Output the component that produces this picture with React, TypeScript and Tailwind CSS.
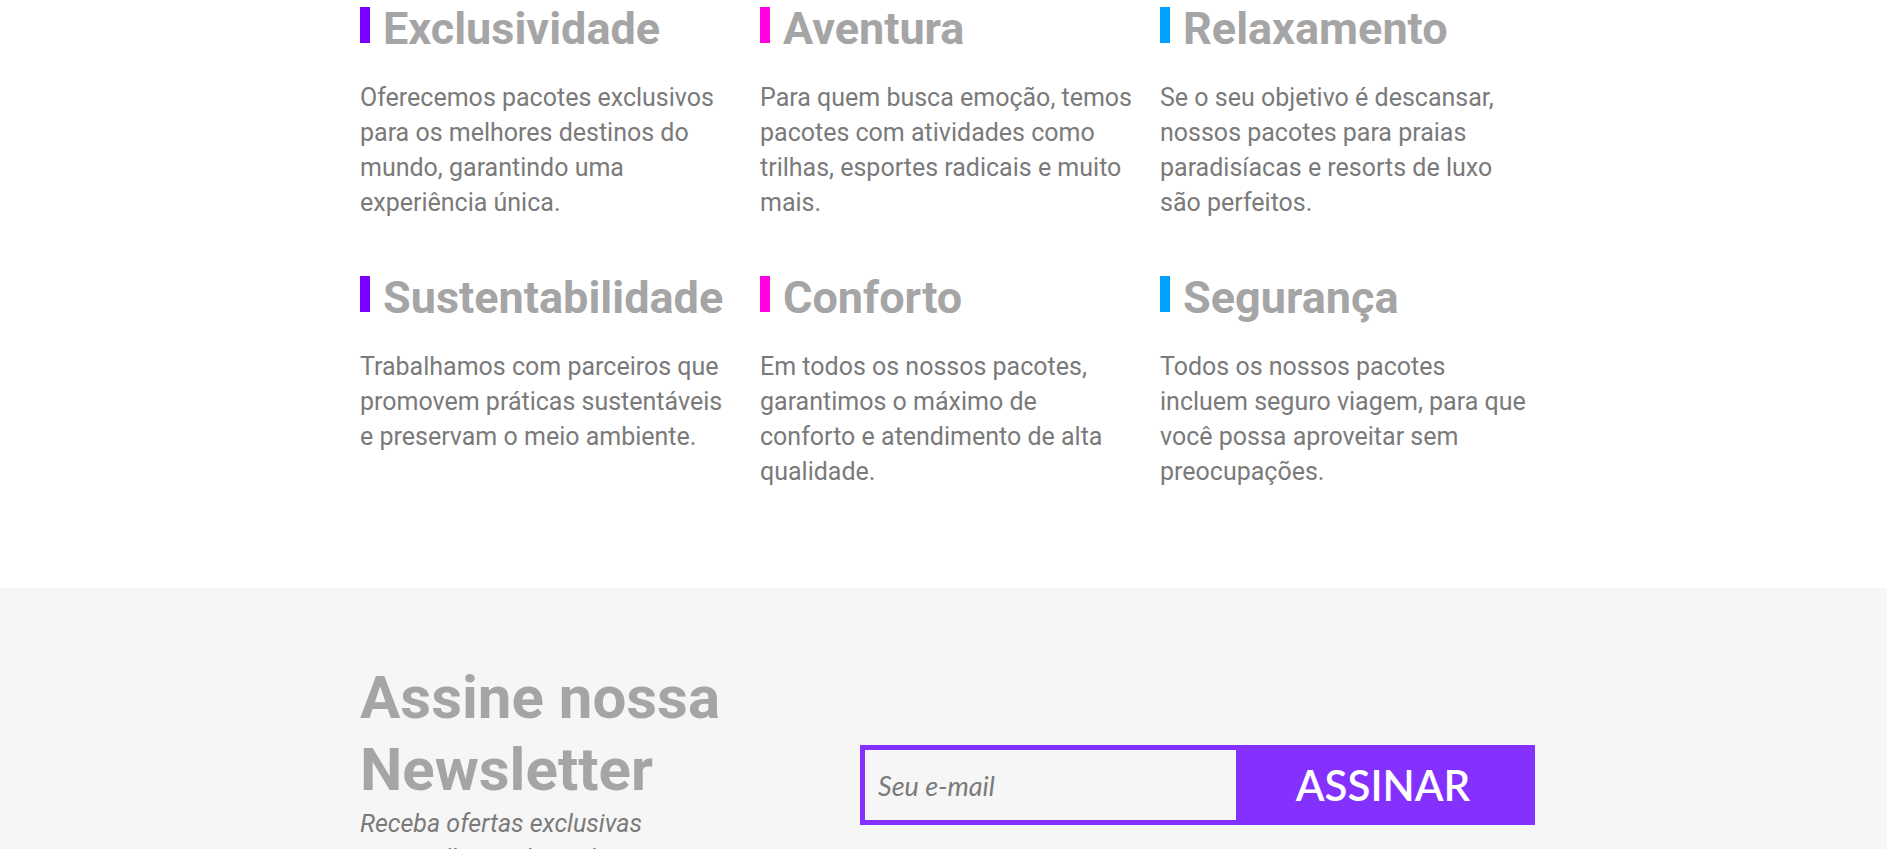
import React from "react";

const features = [
  {
    title: "Exclusividade",
    bar: "bg-[#7b00ff]",
    text: "Oferecemos pacotes exclusivos para os melhores destinos do mundo, garantindo uma experiência única.",
  },
  {
    title: "Aventura",
    bar: "bg-[#ff00e1]",
    text: "Para quem busca emoção, temos pacotes com atividades como trilhas, esportes radicais e muito mais.",
  },
  {
    title: "Relaxamento",
    bar: "bg-[#00a2ff]",
    text: "Se o seu objetivo é descansar, nossos pacotes para praias paradisíacas e resorts de luxo são perfeitos.",
  },
  {
    title: "Sustentabilidade",
    bar: "bg-[#7b00ff]",
    text: "Trabalhamos com parceiros que promovem práticas sustentáveis e preservam o meio ambiente.",
  },
  {
    title: "Conforto",
    bar: "bg-[#ff00e1]",
    text: "Em todos os nossos pacotes, garantimos o máximo de conforto e atendimento de alta qualidade.",
  },
  {
    title: "Segurança",
    bar: "bg-[#00a2ff]",
    text: "Todos os nossos pacotes incluem seguro viagem, para que você possa aproveitar sem preocupações.",
  },
];

function Feature({ title, bar, text }: { title: string; bar: string; text: string }) {
  return (
    <div>
      <div className="flex items-start gap-[13px]">
        <span className={`mt-[5px] h-[36px] w-[10px] shrink-0 ${bar}`} />
        <h3 className="text-[45px] font-bold leading-[54px] text-[#a5a5a5]">{title}</h3>
      </div>
      <p className="mt-[24px] text-[25px] leading-[35px] text-[#7a7a7a]">{text}</p>
    </div>
  );
}

export default function App() {
  return (
    <div className="min-h-screen bg-white font-['Roboto',sans-serif]">
      <section className="pt-[2px] pb-[99px]">
        <div className="ml-[360px] grid w-[1175px] grid-cols-3 gap-x-[25px] gap-y-[51px]">
          {features.map((f) => (
            <Feature key={f.title} {...f} />
          ))}
        </div>
      </section>

      <section className="bg-[#f6f6f6] pt-[74px] pb-[60px]">
        <div className="ml-[360px] flex w-[1175px] items-center">
          <div className="w-[500px] shrink-0">
            <h2 className="w-[380px] text-[60px] font-bold leading-[72px] text-[#a5a5a5]">
              Assine nossa Newsletter
            </h2>
            <p className="w-[290px] text-[25px] italic leading-[35px] text-[#7a7a7a]">
              Receba ofertas exclusivas e as melhores dicas de viagem no seu e-mail.
            </p>
          </div>
          <form className="mb-[3px] flex h-[80px] w-[675px] border-[5px] border-[#8430ff]">
            <input
              type="email"
              placeholder="Seu e-mail"
              className="h-full w-[371px] bg-[#f6f6f6] px-[13px] font-['Lato',sans-serif] text-[27px] italic text-[#7a7a7a] placeholder:text-[#7a7a7a] outline-none"
            />
            <button
              type="button"
              className="flex flex-1 items-center justify-center bg-[#8430ff] font-['Lato',sans-serif] text-[42px] font-semibold text-white"
            >
              ASSINAR
            </button>
          </form>
        </div>
      </section>
    </div>
  );
}
